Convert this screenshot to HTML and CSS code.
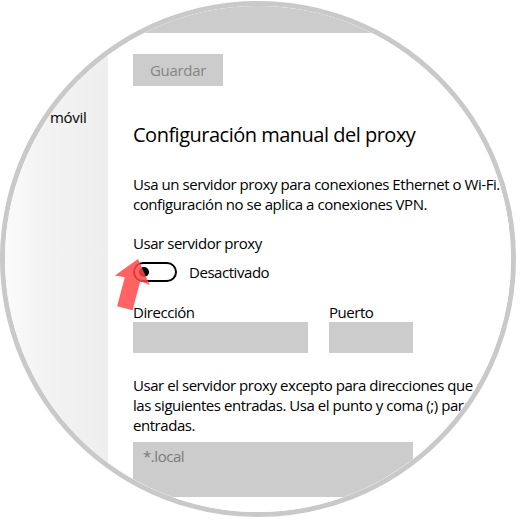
FILE: index.html
```html
<!DOCTYPE html>
<html lang="es">
<head>
  <meta charset="UTF-8" />
  <meta name="viewport" content="width=device-width, initial-scale=1.0"/>
  <title>Proxy</title>
  <link rel="stylesheet" href="styles.css">
</head>
<body>
  <div class="lens">
    <div class="screen">
      <div class="side">
        <div class="side-item">móvil</div>
      </div>
      <div class="content">
        <div class="field top-field"></div>
        <button class="save-btn">Guardar</button>
        <h2 class="title">Configuración manual del proxy</h2>
        <p class="desc">Usa un servidor proxy para conexiones Ethernet o Wi-Fi. Esta<br>configuración no se aplica a conexiones VPN.</p>
        <div class="label">Usar servidor proxy</div>
        <div class="toggle-row">
          <span class="toggle"><span class="knob"></span></span>
          <span>Desactivado</span>
        </div>
        <div class="addr-row">
          <div class="col">
            <div class="label">Dirección</div>
            <div class="field addr"></div>
          </div>
          <div class="col">
            <div class="label">Puerto</div>
            <div class="field port"></div>
          </div>
        </div>
        <p class="desc except">Usar el servidor proxy excepto para direcciones que comiencen con<br>las siguientes entradas. Usa el punto y coma (;) para separar las<br>entradas.</p>
        <div class="field exceptions">*.local</div>
      </div>
      <svg class="arrow" width="60" height="70" viewBox="0 0 60 70">
        <g transform="translate(35 4) rotate(15)">
          <polygon points="0,0 18,22 8,21 8,51 -8,51 -8,21 -18,22" />
        </g>
      </svg>
    </div>
  </div>
</body>
</html>
```

FILE: styles.css
```css
body {
  margin: 0;
  background: #fff;
  font-family: 'Open Sans', 'Noto Sans', sans-serif;
  color: #000;
}
.lens {
  position: relative;
  width: 516px;
  height: 516px;
  margin-top: 1px;
  box-sizing: border-box;
  border: 5px solid #c9c9c9;
  border-radius: 50%;
  overflow: hidden;
}
.screen {
  display: flex;
  height: 100%;
}
.side {
  width: 103px;
  flex-shrink: 0;
  padding: 101px 0 0 45px;
  box-sizing: border-box;
  background: linear-gradient(to right, #fbfbfb 0%, #f3f3f3 35%, #eeeeee 100%);
  font-size: 15px;
  line-height: 20px;
  letter-spacing: -0.3px;
}
.content {
  flex: 1;
  padding-left: 25px;
  background: #fff;
  white-space: nowrap;
  overflow: hidden;
  font-size: 15px;
  line-height: 20px;
  letter-spacing: -0.45px;
}
.field {
  background: #cccccc;
}
.top-field {
  width: 280px;
  height: 27px;
}
.save-btn {
  display: block;
  margin-top: 21px;
  width: 90px;
  height: 32px;
  border: none;
  background: #cccccc;
  color: #858585;
  font-family: inherit;
  font-size: 15px;
  letter-spacing: -0.3px;
  padding: 0;
}
.title {
  margin: 35px 0 0;
  font-size: 20px;
  line-height: 28px;
  font-weight: 400;
  letter-spacing: -0.5px;
}
.desc {
  margin: 25px 0 0;
}
.label {
  margin-top: 19px;
}
.toggle-row {
  display: flex;
  align-items: center;
  gap: 12px;
  margin-top: 9px;
  height: 20px;
}
.toggle {
  width: 44px;
  height: 20px;
  box-sizing: border-box;
  border: 2px solid #000;
  border-radius: 10px;
  display: flex;
  align-items: center;
  padding-left: 4px;
}
.knob {
  width: 10px;
  height: 10px;
  border-radius: 50%;
  background: #000;
}
.addr-row {
  display: flex;
  gap: 21px;
  margin-top: 20px;
}
.addr-row .label {
  margin-top: 0;
}
.addr {
  width: 175px;
  height: 31px;
}
.port {
  width: 84px;
  height: 31px;
}
.except {
  margin-top: 22px;
}
.exceptions {
  margin-top: 7px;
  width: 270px;
  height: 51px;
  padding: 4px 0 0 10px;
  color: #7a7a7a;
}
.arrow {
  position: absolute;
  left: 98px;
  top: 249px;
}
.arrow polygon {
  fill: rgba(255, 72, 72, 0.85);
}
```
